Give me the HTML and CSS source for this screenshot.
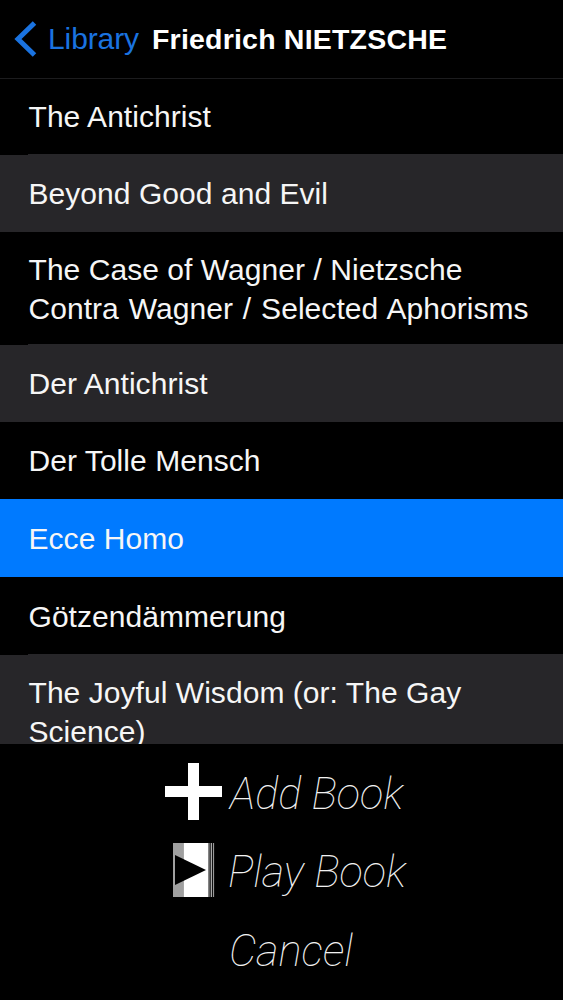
FILE: index.html
```html
<!DOCTYPE html>
<html lang="en">
<head>
<meta charset="utf-8">
<title>Friedrich NIETZSCHE</title>
<link rel="stylesheet" href="styles.css">
</head>
<body>
<div class="screen">
  <header class="nav">
    <a class="back">
      <svg class="chevron" width="26" height="38" viewBox="0 0 26 38"><path d="M21.5 3 L5 19 L21.5 35" fill="none" stroke="#1a73e0" stroke-width="5"/></svg>
      <span class="back-label">Library</span>
    </a>
    <h1 class="title">Friedrich NIETZSCHE</h1>
  </header>
  <ul class="list">
    <li class="row first">The Antichrist</li>
    <li class="row alt r77">Beyond Good and Evil</li>
    <li class="row tall"><span>The Case of Wagner / Nietzsche<br><span class="wide">Contra Wagner / Selected Aphorisms</span></span></li>
    <li class="row alt r77">Der Antichrist</li>
    <li class="row r77">Der Tolle Mensch</li>
    <li class="row selected r78">Ecce Homo</li>
    <li class="row r78">Götzendämmerung</li>
    <li class="row alt last">The Joyful Wisdom (or: The Gay<br>Science)</li>
  </ul>
  <footer class="actions">
    <div class="action">
      <svg class="icon" width="58" height="58" viewBox="0 0 58 58"><path d="M23 0h11v23h23v11H34v23H23V34H0V23h23z" fill="#fff"/></svg>
      <span class="action-label">Add Book</span>
    </div>
    <div class="action">
      <svg class="icon" width="56" height="56" viewBox="0 0 56 56">
        <rect x="8" y="0" width="10.500" height="54" fill="#a0a0a0"/>
        <rect x="18.500" y="0" width="25" height="54" fill="#fff"/>
        <rect x="43.500" y="0" width="1.200" height="54" fill="#888"/>
        <rect x="45.700" y="0" width="1.200" height="54" fill="#bbb"/>
        <rect x="47.900" y="0" width="1.200" height="54" fill="#999"/>
        <path d="M10 12 L41 27 L10 42z" fill="#000"/>
      </svg>
      <span class="action-label">Play Book</span>
    </div>
    <div class="action">
      <span class="icon-space"></span>
      <span class="action-label">Cancel</span>
    </div>
  </footer>
</div>
</body>
</html>
```

FILE: styles.css
```css
* { box-sizing: border-box; margin: 0; padding: 0; }
html, body { background: #000; }
body { width: 563px; height: 1000px; overflow: hidden; font-family: "Liberation Sans", Arial, sans-serif; color: #fff; }
.screen { width: 563px; height: 1000px; display: flex; flex-direction: column; background: #000; }
.nav { height: 79px; flex: none; display: flex; align-items: center; border-bottom: 1px solid #1c1c1e; padding: 0 0 0 13px; }
.back { display: flex; align-items: center; color: #1a73e0; }
.chevron { flex: none; }
.back-label { font-size: 30px; margin-left: 9px; letter-spacing: -.1px; }
.title { font-size: 28.500px; font-weight: 700; margin-left: 13px; letter-spacing: .2px; }
.list { list-style: none; height: 665px; flex: none; overflow: hidden; }
.row { display: flex; align-items: center; padding: 2px 0 0 28.500px; font-size: 30px; line-height: 38.500px; color: #f6f6f6; letter-spacing: .05px; }
.wide { word-spacing: 1.500px; }
.first { height: 76px; padding-top: 0; }
.r77 { height: 77px; }
.r78 { height: 78px; }
.tall { height: 113px; }
.alt { background: #272629; position: relative; }
.alt::before { content: ""; position: absolute; left: 28px; right: 0; top: -1px; height: 1px; background: #272629; }
.selected { background: #007aff; }
.last { display: block; padding-top: 19px; height: 120px; }
.actions { flex: 1; display: flex; flex-direction: column; padding-top: 11px; }
.action { height: 78.500px; display: flex; align-items: center; padding-left: 165px; gap: 7px; }
.icon { flex: none; margin-bottom: 4px; }
.icon-space { width: 57px; flex: none; }
.action-label { font-family: "Roboto", sans-serif; font-style: italic; font-weight: 100; font-size: 43.500px; letter-spacing: -.05px; color: #f2f2f2; }
```
